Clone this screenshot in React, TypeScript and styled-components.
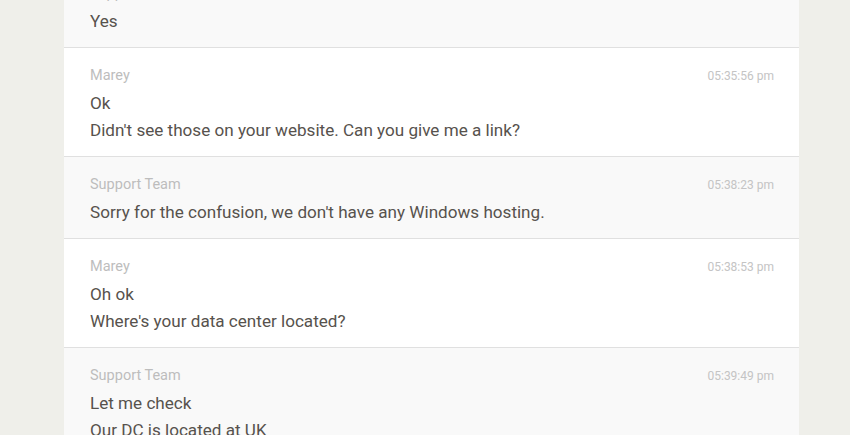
import React from "react";
import styled, { createGlobalStyle } from "styled-components";

const Global = createGlobalStyle`
  html, body { margin: 0; padding: 0; background: #efefea; overflow: hidden; }
  body { font-family: Roboto, "Liberation Sans", sans-serif; }
`;

const Page = styled.div`
  height: 435px;
  overflow: hidden;
  padding: 0 51px 0 64px;
`;

const Thread = styled.div`
  margin-top: -34px;
  display: flex;
  flex-direction: column;
`;

const Row = styled.div<{ $support: boolean }>`
  background: ${(p) => (p.$support ? "#f9f9f9" : "#ffffff")};
  border-bottom: 1px solid #e0e0e0;
  padding: 18px 25px 12px 26px;
  display: flex;
  flex-direction: column;
`;

const Head = styled.div`
  display: flex;
  justify-content: space-between;
  align-items: center;
  height: 18px;
  margin-bottom: 6px;
`;

const Name = styled.span`
  font-size: 14.5px;
  color: #bdbdbd;
`;

const Time = styled.span`
  font-size: 12px;
  color: #c4c4c4;
  margin-top: 2px;
`;

const Line = styled.div`
  font-size: 17.1px;
  line-height: 27px;
  color: #57524d;
`;

type Msg = { who: string; time?: string; lines: string[] };

const messages: Msg[] = [
  { who: "Support Team", lines: ["Yes"] },
  {
    who: "Marey",
    time: "05:35:56 pm",
    lines: ["Ok", "Didn't see those on your website. Can you give me a link?"],
  },
  {
    who: "Support Team",
    time: "05:38:23 pm",
    lines: ["Sorry for the confusion, we don't have any Windows hosting."],
  },
  {
    who: "Marey",
    time: "05:38:53 pm",
    lines: ["Oh ok", "Where's your data center located?"],
  },
  {
    who: "Support Team",
    time: "05:39:49 pm",
    lines: ["Let me check", "Our DC is located at UK"],
  },
];

export default function App() {
  return (
    <>
      <Global />
      <Page>
        <Thread>
          {messages.map((m, i) => (
            <Row key={i} $support={m.who !== "Marey"}>
              <Head>
                <Name>{m.who}</Name>
                {m.time && <Time>{m.time}</Time>}
              </Head>
              {m.lines.map((l, j) => (
                <Line key={j}>{l}</Line>
              ))}
            </Row>
          ))}
        </Thread>
      </Page>
    </>
  );
}
